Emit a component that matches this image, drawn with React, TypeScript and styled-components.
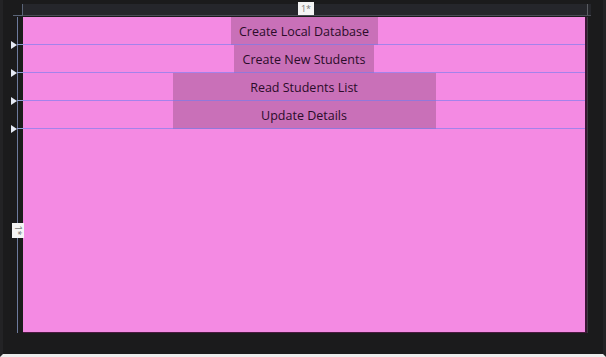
import React from 'react';
import styled, { createGlobalStyle } from 'styled-components';

const rows = [
  { label: 'Create Local Database', width: 147 },
  { label: 'Create New Students', width: 140 },
  { label: 'Read Students List', width: 263 },
  { label: 'Update Details', width: 263 },
];

const GlobalStyle = createGlobalStyle`
  html, body {
    margin: 0;
    padding: 0;
    background: #1b1b1c;
  }
`;

const Frame = styled.div`
  width: 606px;
  height: 357px;
  box-sizing: border-box;
  background: #1b1b1c;
  border-left: 3px solid #232325;
  border-bottom: 3px solid #ededed;
  border-right: 3px solid #232325;
  display: grid;
  grid-template-columns: 20px 564px 1fr;
  grid-template-rows: 17px 316px 1fr;
  font-family: 'Open Sans', 'Noto Sans', sans-serif;
`;

const Corner = styled.div`
  border-right: 1px solid #5a6478;
  border-bottom: 1px solid #5a6478;
  margin: 4px 0 1px 10px;
`;

const TopRuler = styled.div`
  margin: 4px 0 1px;
  background: #25262b;
  border-bottom: 1px solid #4a4c55;
  display: flex;
  justify-content: center;
  align-items: flex-start;
`;

const TopLabel = styled.div`
  margin-top: -2px;
  margin-left: 2px;
  background: #f4f4f4;
  color: #777;
  font-size: 9px;
  line-height: 13px;
  height: 13px;
  padding: 0 3px;
`;

const RulerEnd = styled.div`
  margin: 4px 12px 1px 0;
  border-left: 1px solid #5a5c62;
  background: #25262b;
  border-bottom: 1px solid #4a4c55;
`;

const LeftRuler = styled.div`
  position: relative;
  display: flex;
  flex-direction: column;
  background: linear-gradient(
    to right,
    transparent 14px,
    #6d7a9c 14px,
    #6d7a9c 15px,
    transparent 15px
  );
`;

const MarkerSlot = styled.div`
  height: 28px;
  display: flex;
  align-items: flex-end;
  justify-content: flex-end;
`;

const Marker = styled.div`
  width: 0;
  height: 0;
  margin-bottom: -4px;
  border-top: 4px solid transparent;
  border-bottom: 4px solid transparent;
  border-left: 6px solid #e6ebf6;
`;

const Tail = styled.div`
  width: 6px;
  height: 1px;
  background: #8f9fd0;
`;

const SideLabel = styled.div`
  position: absolute;
  right: -1px;
  top: 206px;
  width: 12px;
  height: 15px;
  background: #f4f4f4;
  color: #777;
  font-size: 9px;
  display: flex;
  align-items: center;
  justify-content: center;
  span {
    transform: rotate(90deg);
  }
`;

const Canvas = styled.div`
  background: #f48ae3;
  border-right: 2px solid #3a1434;
  border-bottom: 1px solid #4a1a40;
  display: flex;
  flex-direction: column;
`;

const Row = styled.div`
  height: 28px;
  position: relative;
  display: flex;
  justify-content: center;
  &::after {
    content: '';
    position: absolute;
    left: 0;
    right: 0;
    bottom: 0;
    height: 1px;
    background: rgba(110, 125, 240, 0.6);
  }
`;

const Button = styled.div<{ $w: number }>`
  width: ${({ $w }) => $w}px;
  background: #c970b8;
  color: #2b0c2a;
  font-size: 12.5px;
  display: flex;
  align-items: center;
  justify-content: center;
`;

const RightStrip = styled.div`
  border-left: 1px solid #3c3c40;
  margin-right: 12px;
`;

export default function App() {
  return (
    <>
      <GlobalStyle />
      <Frame>
        <Corner />
        <TopRuler>
          <TopLabel>1*</TopLabel>
        </TopRuler>
        <RulerEnd />
        <LeftRuler>
          {rows.map((r) => (
            <MarkerSlot key={r.label}>
              <Marker />
              <Tail />
            </MarkerSlot>
          ))}
          <SideLabel>
            <span>1*</span>
          </SideLabel>
        </LeftRuler>
        <Canvas>
          {rows.map((r) => (
            <Row key={r.label}>
              <Button $w={r.width}>{r.label}</Button>
            </Row>
          ))}
        </Canvas>
        <RightStrip />
      </Frame>
    </>
  );
}
